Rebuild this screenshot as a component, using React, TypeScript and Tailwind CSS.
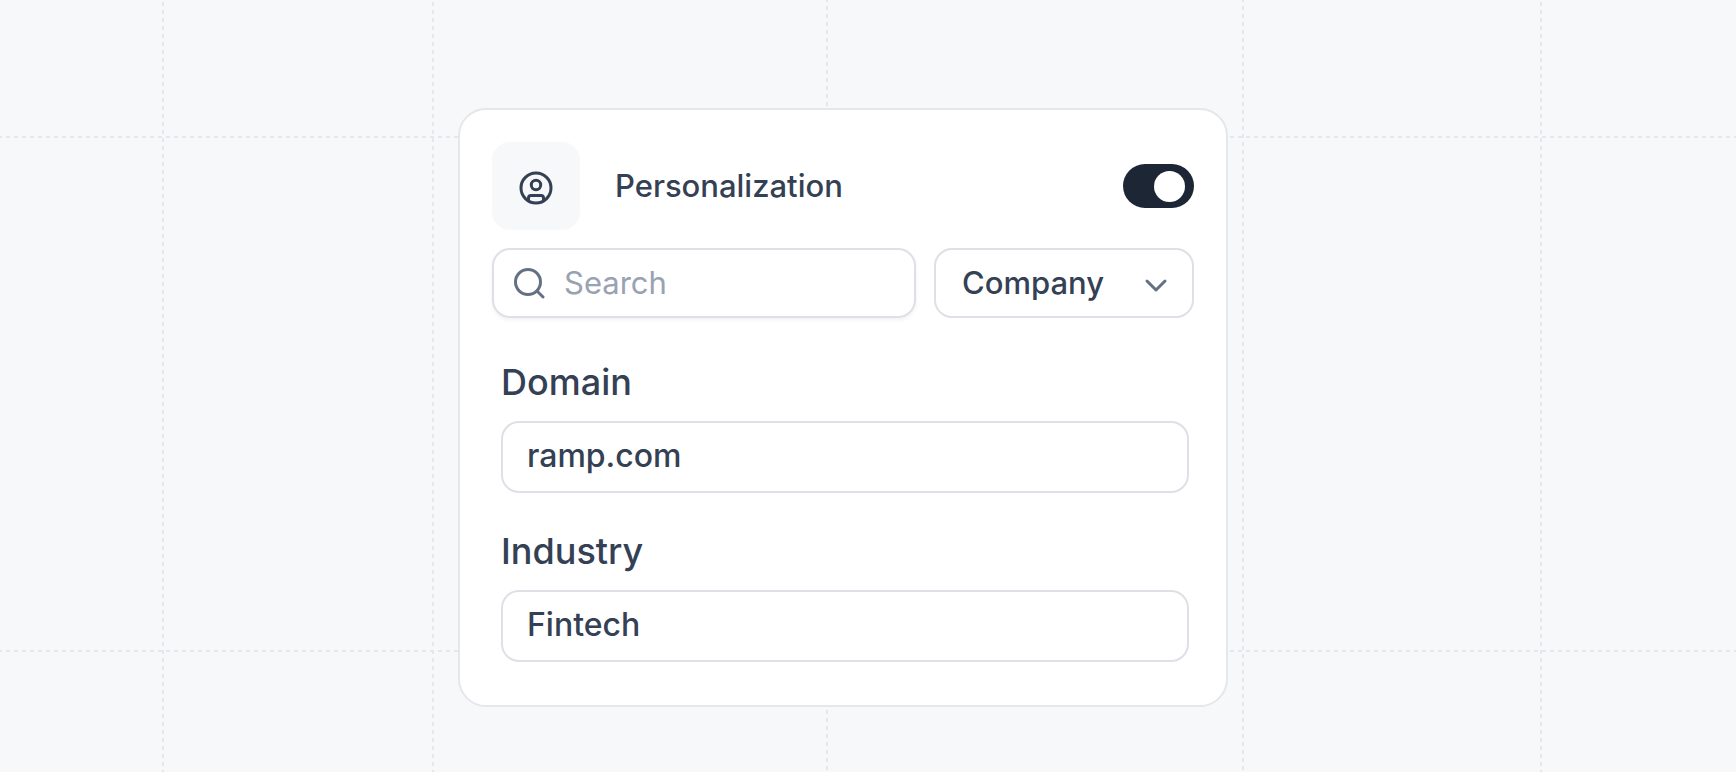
import { useState } from "react";

// x position and dash offset of every vertical guide line
const verticalLines = [
  { x: 163, offset: 6 },
  { x: 433, offset: 6 },
  { x: 827, offset: 2 },
  { x: 1243, offset: 2 },
  { x: 1541, offset: 6 },
];

const horizontalLines = [137, 651];

function GuideLines() {
  return (
    <svg
      className="absolute inset-0 w-full h-full text-[#e5e7eb]"
      stroke="currentColor"
      strokeWidth="2"
      strokeDasharray="4 4"
      aria-hidden="true"
    >
      {horizontalLines.map((y) => (
        <line key={y} x1="0" x2="100%" y1={y} y2={y} strokeDashoffset="2" />
      ))}
      {verticalLines.map(({ x, offset }) => (
        <line key={x} x1={x} x2={x} y1="0" y2="100%" strokeDashoffset={offset} />
      ))}
    </svg>
  );
}

function UserCircleIcon() {
  return (
    <svg
      className="w-10 h-10 text-[#344054]"
      viewBox="0 0 40 40"
      fill="none"
      stroke="currentColor"
      strokeWidth="3"
      strokeLinejoin="round"
      aria-hidden="true"
    >
      <circle cx="20" cy="22" r="15" />
      <circle cx="20" cy="19" r="4.7" />
      <path d="M12.5 34v-2a2.5 2.5 0 0 1 2.5-2.5h10a2.5 2.5 0 0 1 2.5 2.5v2" />
    </svg>
  );
}

function SearchIcon() {
  return (
    <svg
      className="w-8 h-8 shrink-0 text-[#667085]"
      viewBox="0 0 32 32"
      fill="none"
      stroke="currentColor"
      strokeWidth="3"
      strokeLinecap="round"
      aria-hidden="true"
    >
      <circle cx="15" cy="15" r="12.5" />
      <path d="M24 24l6 6" />
    </svg>
  );
}

function ChevronDownIcon() {
  return (
    <svg
      className="absolute right-[26px] top-6 w-6 h-6 text-[#667085] pointer-events-none"
      viewBox="0 0 24 24"
      fill="none"
      stroke="currentColor"
      strokeWidth="3"
      strokeLinecap="round"
      strokeLinejoin="round"
      aria-hidden="true"
    >
      <path d="M3 9l9 9 9-9" />
    </svg>
  );
}

function Field({
  id,
  label,
  defaultValue,
}: {
  id: string;
  label: string;
  defaultValue: string;
}) {
  return (
    <div className="flex flex-col gap-[19px]">
      <label htmlFor={id} className="text-4xl font-medium">
        {label}
      </label>
      <input
        id={id}
        type="text"
        defaultValue={defaultValue}
        className="w-full h-18 px-6 pb-1 border-2 border-[#dde1e6] rounded-[18px] text-[32px] font-medium bg-white outline-none"
      />
    </div>
  );
}

function App() {
  const [enabled, setEnabled] = useState(true);
  const [search, setSearch] = useState("");

  return (
    <main className="relative min-h-screen bg-[#f7f8fa] pt-27 pb-16 pr-[50px] flex justify-center items-start font-['Inter',sans-serif] text-[#344054]">
      <GuideLines />

      <section className="relative w-full max-w-[770px] bg-white border-2 border-[#e5e7eb] rounded-[28px] p-8 pb-[43px]">
        {/* Header */}
        <div className="flex items-center">
          <div className="w-22 h-22 rounded-[18px] bg-[#f7f8fa] flex items-center justify-center">
            <UserCircleIcon />
          </div>
          <h1 id="personalization" className="ml-[35px] text-[31px] font-medium">
            Personalization
          </h1>
          <button
            type="button"
            role="switch"
            aria-checked={enabled}
            aria-labelledby="personalization"
            onClick={() => setEnabled(!enabled)}
            className={`ml-auto w-[71px] h-11 px-[9px] rounded-full flex items-center ${
              enabled ? "bg-[#1d2635] justify-end" : "bg-[#d0d5dd] justify-start"
            }`}
          >
            <span className="w-[31px] h-[31px] rounded-full bg-white" />
          </button>
        </div>

        {/* Search and filter */}
        <div className="mt-[18px] flex gap-[18px]">
          <div className="flex-1 min-w-0 h-[70px] px-[19px] flex items-center gap-[19px] border-2 border-[#dde1e6] rounded-[18px] shadow-[0_2px_4px_rgba(16,24,40,0.06)]">
            <SearchIcon />
            <input
              type="search"
              aria-label="Search"
              placeholder="Search"
              value={search}
              onChange={(e) => setSearch(e.target.value)}
              className="w-full min-w-0 text-[31px] outline-none placeholder:text-[#98a2b3]"
            />
          </div>
          <div className="relative w-[260px]">
            <select
              aria-label="Filter"
              className="appearance-none w-full h-[70px] pl-[26px] pr-16 border-2 border-[#dde1e6] rounded-[18px] bg-white text-[31px] font-medium outline-none"
            >
              <option>Company</option>
            </select>
            <ChevronDownIcon />
          </div>
        </div>

        {/* Company details */}
        <div className="mt-[44px] ml-[9px] mr-[5px] flex flex-col gap-[38px]">
          <Field id="domain" label="Domain" defaultValue="ramp.com" />
          <Field id="industry" label="Industry" defaultValue="Fintech" />
        </div>
      </section>
    </main>
  );
}

export default App;
